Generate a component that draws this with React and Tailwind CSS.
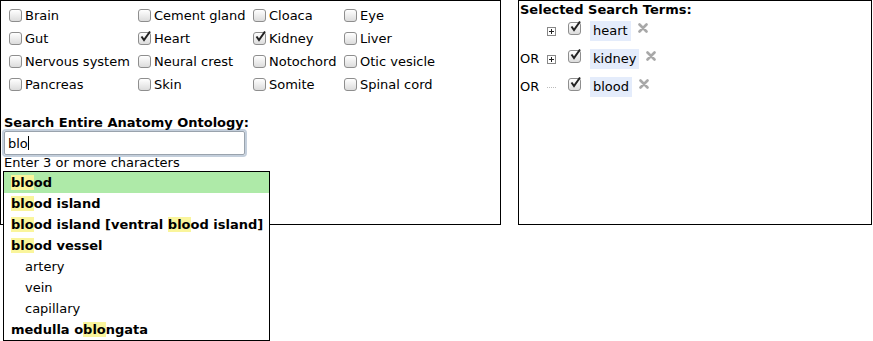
import React from 'react';

const font = { fontFamily: '"DejaVu Sans", Verdana, sans-serif' };

// small fake checkbox so it looks like the old Safari one
function Box({ checked }) {
  return (
    <span className="relative inline-block w-[13px] h-[13px] shrink-0 rounded-[3px] border border-[#8e8e8e] bg-gradient-to-b from-white to-[#dcdcdc]">
      {checked && (
        <svg viewBox="0 0 13 13" width="13" height="13" className="absolute -top-[3px] left-[0px]">
          <path d="M2.5 6.5 5 10 11 1.5" fill="none" stroke="#222" strokeWidth="2" />
        </svg>
      )}
    </span>
  );
}

const ROWS = [
  [['Brain'], ['Cement gland'], ['Cloaca'], ['Eye']],
  [['Gut'], ['Heart', true], ['Kidney', true], ['Liver']],
  [['Nervous system'], ['Neural crest'], ['Notochord'], ['Otic vesicle']],
  [['Pancreas'], ['Skin'], ['Somite'], ['Spinal cord']],
];

function Hi({ children }) {
  return <span className="bg-[#faf59c]">{children}</span>;
}

const MATCHES = [
  { k: 1, active: true, text: <><Hi>blo</Hi>od</> },
  { k: 2, text: <><Hi>blo</Hi>od island</> },
  { k: 3, text: <><Hi>blo</Hi>od island [ventral <Hi>blo</Hi>od island]</> },
  { k: 4, text: <><Hi>blo</Hi>od vessel</> },
  { k: 5, sub: true, text: 'artery' },
  { k: 6, sub: true, text: 'vein' },
  { k: 7, sub: true, text: 'capillary' },
  { k: 8, text: <>medulla o<Hi>blo</Hi>ngata</> },
];

function Cross() {
  return (
    <svg viewBox="0 0 10 10" width="10" height="10">
      <path d="M1.5 1.5 8.5 8.5M8.5 1.5 1.5 8.5" stroke="#a8a8a8" strokeWidth="2.6" strokeLinecap="round" />
    </svg>
  );
}

function Plus() {
  return (
    <span className="w-[9px] h-[9px] border border-[#888] bg-white flex items-center justify-center">
      <svg viewBox="0 0 7 7" width="7" height="7">
        <path d="M1 3.5h5M3.5 1v5" stroke="#222" strokeWidth="1" />
      </svg>
    </span>
  );
}

const TERMS = [
  { t: 'heart', or: false, plus: true },
  { t: 'kidney', or: true, plus: true },
  { t: 'blood', or: true, plus: false },
];

export default function App() {
  return (
    <div className="w-[873px] h-[341px] bg-white text-[13px] text-black flex items-start gap-[17px] overflow-hidden" style={font}>
      <div className="relative w-[501px] h-[225px] border border-black shrink-0">
        <div className="grid grid-cols-[129px_115px_91px_1fr] pl-[8px] pt-[3px]">
          {ROWS.flat().map(([label, on]) => (
            <label key={label} className="h-[23px] flex items-center gap-[3px] whitespace-nowrap">
              <Box checked={on} />
              <span>{label}</span>
            </label>
          ))}
        </div>
        <div className="pl-[3px] pt-[19px]">
          <div className="font-bold leading-[16px]">Search Entire Anatomy Ontology:</div>
          <div className="w-[241px] h-[24px] border border-[#9aa3ad] rounded-[2px] shadow-[0_0_0_2px_#c4cfdc] flex items-center pl-[3px] leading-none">
            blo<span className="w-px h-[14px] bg-black" />
          </div>
          <div className="mt-[0px] leading-[16px]">Enter 3 or more characters</div>
        </div>
        <div className="absolute left-[2px] top-[170px] w-[267px] h-[170px] border border-black bg-white">
          {MATCHES.map((m) => (
            <div
              key={m.k}
              className={`h-[21px] flex items-center whitespace-nowrap ${m.sub ? 'pl-[21px]' : 'pl-[7px] font-bold'} ${m.active ? 'bg-[#aeeaa8]' : ''}`}
            >
              <span>{m.text}</span>
            </div>
          ))}
        </div>
      </div>

      <div className="w-[354px] h-[225px] border border-black shrink-0 pl-[1px]">
        <div className="font-bold leading-[16px] pt-[1px]">Selected Search Terms:</div>
        <div className="flex flex-col gap-[8px] mt-[3px]">
          {TERMS.map((r) => (
            <div key={r.t} className="h-[20px] flex items-center">
              <span className="w-[27px]">{r.or ? 'OR' : ''}</span>
              {r.plus ? <Plus /> : <span className="w-[9px] border-t border-dotted border-[#bbb] mt-[1px]" />}
              <span className="ml-[12px]"><Box checked /></span>
              <span className="ml-[9px] h-[20px] px-[3px] bg-[#e4ecfb] flex items-center">{r.t}</span>
              <span className="ml-[7px] flex items-center mb-[6px]"><Cross /></span>
            </div>
          ))}
        </div>
      </div>
    </div>
  );
}
